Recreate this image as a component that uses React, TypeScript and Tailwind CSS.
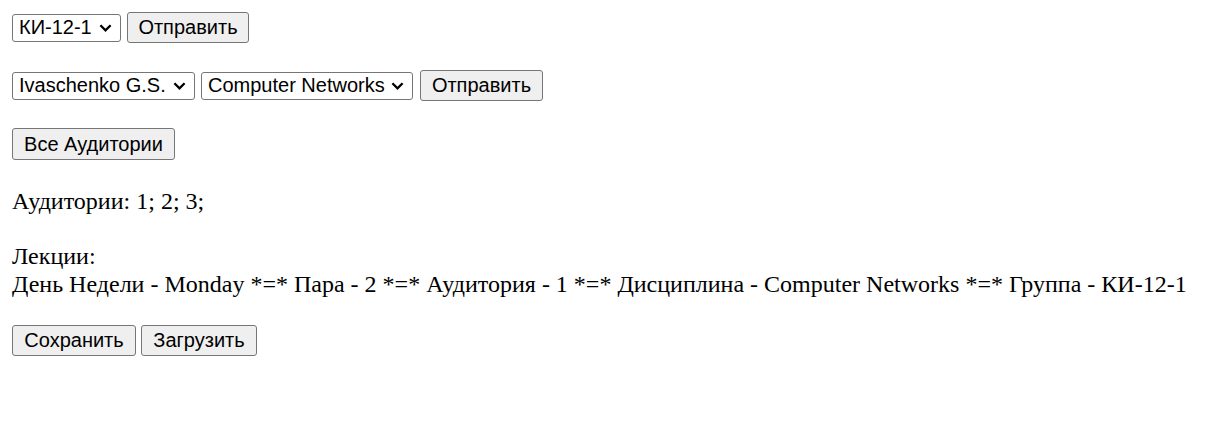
import type { ReactNode } from 'react';

const controlFont = "font-['Liberation_Sans',Arial,sans-serif] text-[20px] leading-[23px] text-black";

function Chevron() {
  return (
    <svg
      className="pointer-events-none absolute right-[9px] top-1/2 -translate-y-1/2"
      width="13"
      height="9"
      viewBox="0 0 13 9"
      fill="none"
    >
      <path d="M1.4 1.8 L6.5 6.9 L11.6 1.8" stroke="#000" strokeWidth="2.3" />
    </svg>
  );
}

function Select({ value, options, width }: { value: string; options: string[]; width: string }) {
  return (
    <div className={`relative inline-flex ${width}`}>
      <select
        defaultValue={value}
        className={`${controlFont} h-[28px] w-full appearance-none rounded-[3px] border border-[#767676] bg-white pl-[6px] pr-[26px]`}
      >
        {options.map((o) => (
          <option key={o}>{o}</option>
        ))}
      </select>
      <Chevron />
    </div>
  );
}

function Button({ children, width }: { children: ReactNode; width: string }) {
  return (
    <button
      type="button"
      className={`${controlFont} h-[31px] ${width} rounded-[3px] border border-[#767676] bg-[#efefef] px-[9px]`}
    >
      {children}
    </button>
  );
}

export default function App() {
  return (
    <div className="min-h-[445px] bg-white p-[12px]">
      {/* Group form */}
      <form className="flex items-center gap-[6px]">
        <Select value="КИ-12-1" options={['КИ-12-1']} width="w-[109px]" />
        <Button width="w-[122px]">Отправить</Button>
      </form>

      {/* Teacher / discipline form */}
      <form className="mt-[27px] flex items-center gap-[6px]">
        <Select value="Ivaschenko G.S." options={['Ivaschenko G.S.']} width="w-[183px]" />
        <Select value="Computer Networks" options={['Computer Networks']} width="w-[212px]" />
        <Button width="w-[123px] ml-[1px]">Отправить</Button>
      </form>

      <div className="mt-[27px]">
        <Button width="w-[163px] h-[32px]">Все Аудитории</Button>
      </div>

      {/* Output */}
      <div className="mt-[28px] font-['Liberation_Serif','Times_New_Roman',serif] text-[24px] leading-[27.5px] text-black">
        <div>Аудитории: 1; 2; 3;</div>
        <div className="mt-[27.5px]">Лекции:</div>
        <div>
          День Недели - Monday *=* Пара - 2 *=* Аудитория - 1 *=* Дисциплина - Computer Networks *=* Группа - КИ-12-1
        </div>
      </div>

      <div className="mt-[27px] flex items-center gap-[5px]">
        <Button width="w-[124px]">Сохранить</Button>
        <Button width="w-[116px]">Загрузить</Button>
      </div>
    </div>
  );
}
